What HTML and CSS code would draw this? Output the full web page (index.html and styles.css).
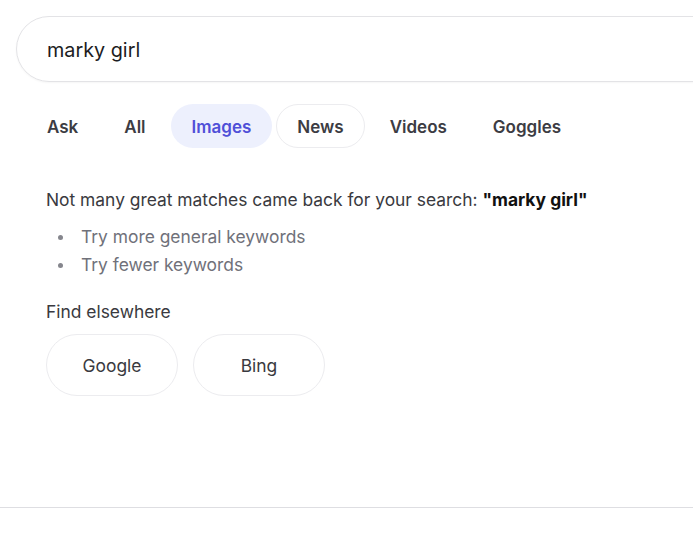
FILE: index.html
```html
<!DOCTYPE html>
<html>
<head>
  <meta charset="UTF-8">
  <title>marky girl - Images</title>
  <link rel="stylesheet" href="styles.css">
</head>
<body>
  <div id="page">
    <div class="search-box">
      <span class="query">marky girl</span>
    </div>
    <nav class="tabs">
      <a class="tab">Ask</a>
      <a class="tab">All</a>
      <a class="tab active">Images</a>
      <a class="tab outlined">News</a>
      <a class="tab">Videos</a>
      <a class="tab">Goggles</a>
    </nav>
    <div class="no-results">
      <p class="message">Not many great matches came back for your search: <strong>"marky girl"</strong></p>
      <ul class="tips">
        <li>Try more general keywords</li>
        <li>Try fewer keywords</li>
      </ul>
      <p class="elsewhere-title">Find elsewhere</p>
      <div class="elsewhere">
        <a class="engine">Google</a>
        <a class="engine">Bing</a>
      </div>
    </div>
  </div>
  <footer class="footer"></footer>
</body>
</html>
```

FILE: styles.css
```css
html, body {
  overflow: hidden;
}
body {
  margin: 0;
  font-family: Inter, 'Noto Sans', sans-serif;
  background-color: #fff;
  color: #3c3c43;
}
#page {
  padding: 16px 0 0 16px;
  height: 507px;
  box-sizing: border-box;
}
.search-box {
  display: flex;
  align-items: center;
  height: 66px;
  box-sizing: border-box;
  margin-right: -40px;
  padding-left: 30px;
  border: 1px solid #e3e3e6;
  border-radius: 33px;
  box-shadow: 0 1px 2px rgba(0,0,0,0.04);
}
.query {
  font-size: 19.8px;
  color: #1c1c22;
  margin-top: 2px;
}
.tabs {
  display: flex;
  gap: 4px;
  margin: 22px 0 0 10px;
}
.tab {
  display: flex;
  align-items: center;
  height: 44px;
  padding: 1px 20px 0;
  box-sizing: border-box;
  border-radius: 22px;
  font-size: 17px;
  font-weight: 600;
  color: #3c3c43;
  border: 1px solid transparent;
}
.tab.active {
  background-color: #edf0fd;
  color: #4f4fd8;
}
.tab.outlined {
  border-color: #ececef;
}
.no-results {
  padding: 0 0 0 30px;
  margin-top: 40px;
}
.message {
  margin: 0;
  font-size: 17.4px;
  line-height: 24px;
  color: #3a3a40;
}
.message strong {
  color: #111;
  font-weight: 700;
}
.tips {
  list-style: none;
  margin: 11px 0 0;
  padding-left: 35px;
  font-size: 17.4px;
  line-height: 28px;
  color: #70717a;
}
.tips li {
  position: relative;
}
.tips li::before {
  content: '';
  position: absolute;
  left: -23px;
  top: 12px;
  width: 5px;
  height: 5px;
  border-radius: 50%;
  background-color: #85868d;
}
.elsewhere-title {
  margin: 21px 0 0;
  font-size: 17.4px;
  line-height: 24px;
  color: #3a3a40;
}
.elsewhere {
  display: flex;
  gap: 15px;
  margin-top: 10px;
}
.engine {
  display: flex;
  align-items: center;
  justify-content: center;
  width: 132px;
  height: 62px;
  box-sizing: border-box;
  border: 1px solid #ececef;
  border-radius: 31px;
  font-size: 17.4px;
  color: #3a3a40;
}
.footer {
  border-top: 1px solid #dedee2;
  height: 27px;
}
```
